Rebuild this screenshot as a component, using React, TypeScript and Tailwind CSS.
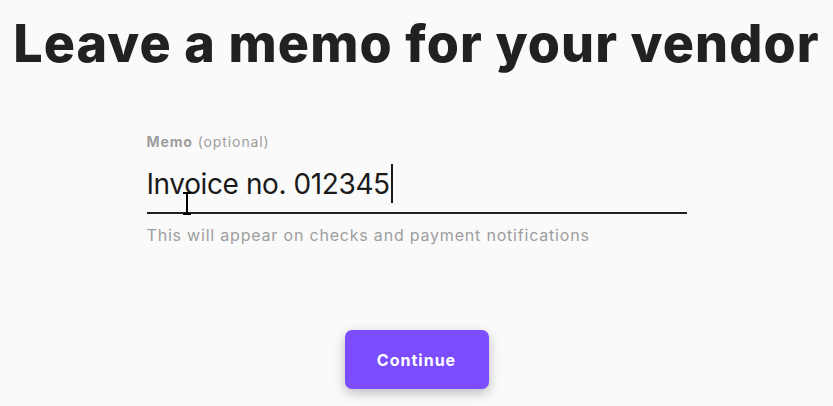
import React from "react";

export default function App() {
  return (
    <div className="min-h-[406px] bg-[#fafafa] flex flex-col items-center font-['Inter','Open_Sans',sans-serif] text-[#212121]">
      <h1 className="mt-[14px] text-[52px] leading-[60px] font-extrabold tracking-[1.1px] whitespace-nowrap">
        Leave a memo for your vendor
      </h1>
      <div className="mt-[60px] w-[540px] relative">
        <div className="text-[14px] leading-[16px] text-[#9e9e9e] tracking-[0.9px]">
          <span className="font-bold">Memo</span> <span>(optional)</span>
        </div>
        <div className="mt-[14px] flex items-center border-b-2 border-[#212121] pb-[9px]">
          <span className="text-[28px] leading-[36px] font-normal text-[#1a1a1a] tracking-[-0.4px]">Invoice no. 012345</span>
          <span className="ml-[1px] w-[2px] h-[39px] bg-[#1a1a1a]"></span>
        </div>
        <div className="mt-[11px] text-[16px] leading-[20px] text-[#9e9e9e] tracking-[0.8px]">
          This will appear on checks and payment notifications
        </div>
        <svg className="absolute left-[34px] top-[58px]" width="12" height="24" viewBox="0 0 12 24">
          <path d="M2 1h8M6 1v21M2 22h8" stroke="#000" strokeWidth="2" fill="none" />
        </svg>
      </div>
      <button className="mt-[85px] w-[144px] h-[59px] rounded-[7px] bg-[#7c4dff] text-white text-[16px] font-bold tracking-[1px] shadow-[0_4px_12px_rgba(0,0,0,0.25)]">
        Continue
      </button>
    </div>
  );
}
